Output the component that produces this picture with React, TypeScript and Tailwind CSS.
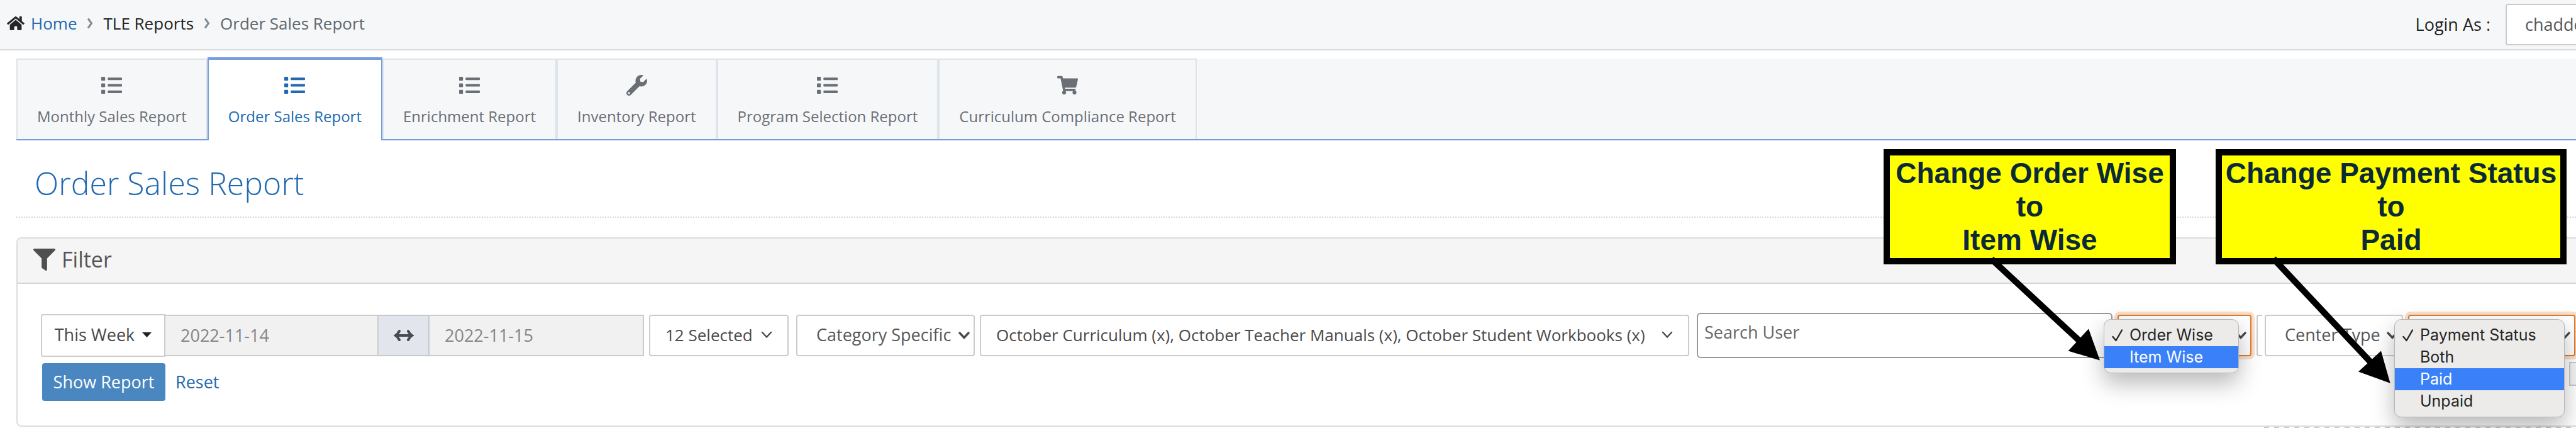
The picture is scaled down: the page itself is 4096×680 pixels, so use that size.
// App.tsx
import { useState } from 'react';
import type { ReactNode } from 'react';
import { FaFilter, FaHome, FaList, FaShoppingCart, FaWrench } from 'react-icons/fa';

const tabs = [
  { label: 'Monthly Sales Report', icon: FaList },
  { label: 'Order Sales Report', icon: FaList },
  { label: 'Enrichment Report', icon: FaList },
  { label: 'Inventory Report', icon: FaWrench },
  { label: 'Program Selection Report', icon: FaList },
  { label: 'Curriculum Compliance Report', icon: FaShoppingCart },
];

function Crumb() {
  return (
    <svg width="10" height="18" viewBox="0 0 10 18" fill="none" stroke="#858b91" strokeWidth="3" aria-hidden="true">
      <path d="M2 1.5 7.500 9 2 16.500" />
    </svg>
  );
}

function Chevron({ bold }: { bold?: boolean }) {
  return (
    <svg
      className="shrink-0"
      width="18"
      height="12"
      viewBox="0 0 18 12"
      fill="none"
      stroke="#4a4a4a"
      strokeWidth={bold ? 3.4 : 2.4}
      aria-hidden="true"
    >
      <path d="M2 2 9 9.500 16 2" strokeLinecap="round" />
    </svg>
  );
}

function Menu({ options, active, className }: { options: string[]; active: string; className: string }) {
  return (
    <ul
      role="listbox"
      className={`absolute top-[7px] -left-[22px] z-10 rounded-[11px] border border-[#b5b5b5] bg-[#ecebea] py-[7px] font-['Inter',sans-serif] text-[25px] leading-[35px] text-[#262626] shadow-[0_16px_36px_rgba(0,0,0,0.28)] ${className}`}
    >
      {options.map((option, i) => (
        <li
          key={option}
          role="option"
          aria-selected={i === 0}
          className={`flex items-center whitespace-nowrap ${option === active ? 'bg-[#3a80f8] text-white' : ''}`}
        >
          <span className="flex w-10 shrink-0 pl-3">
            {i === 0 && (
              <svg width="18" height="20" viewBox="0 0 18 20" fill="none" stroke="#262626" strokeWidth="2.400" aria-hidden="true">
                <path d="M1.500 12 6.500 18 16 1.500" strokeLinecap="round" strokeLinejoin="round" />
              </svg>
            )}
          </span>
          {option}
        </li>
      ))}
    </ul>
  );
}

interface PickerProps {
  id: string;
  label: string;
  options: string[];
  className: string;
  open?: boolean;
  children?: ReactNode;
}

function Picker({ id, label, options, className, open, children }: PickerProps) {
  return (
    <div className={`relative h-[66px] shrink-0 ${className}`}>
      <select
        id={id}
        aria-label={label}
        className={`h-full w-full appearance-none rounded border-2 bg-white pb-0.5 pl-[30px] text-[#55595c] outline-none ${
          open ? 'border-[#e07b2c] shadow-[0_0_0_5px_#f7dfcd]' : 'border-[#ccc]'
        }`}
      >
        {options.map((option) => (
          <option key={option}>{option}</option>
        ))}
      </select>
      <span className="pointer-events-none absolute inset-y-0 right-2 flex items-center">
        <Chevron bold />
      </span>
      {children}
    </div>
  );
}

function Callout({ lines, className, children }: { lines: string[]; className: string; children: ReactNode }) {
  return (
    <div className={`absolute top-[237px] z-20 h-[183px] ${className}`}>
      <div className="flex h-full flex-col items-center justify-center border-10 border-black bg-[#ffff00] font-['Liberation_Sans',Arial,sans-serif] text-[46px] leading-[53px] font-bold text-[#0a2a3a]">
        {lines.map((line) => (
          <span key={line} className="whitespace-nowrap">{line}</span>
        ))}
      </div>
      <svg className="pointer-events-none absolute top-0 left-0 overflow-visible" width="400" height="380" aria-hidden="true">
        {children}
      </svg>
    </div>
  );
}

export default function App() {
  const [tab, setTab] = useState('Order Sales Report');
  const [search, setSearch] = useState('');

  return (
    <div className="relative overflow-hidden bg-white font-['Open_Sans',sans-serif] text-[27px] leading-9">
      {/* Breadcrumb bar */}
      <header className="flex h-20 items-center justify-between border-b-2 border-[#d5dade] bg-[#f6f7f9]">
        <nav className="flex items-center pb-1 pl-[11px] text-[26px]">
          <FaHome size={28} color="#262626" />
          <a href="#home" className="ml-2.5 text-[#2369b0]">Home</a>
          <span className="mx-4"><Crumb /></span>
          <a href="#reports" className="text-[#222]">TLE Reports</a>
          <span className="mx-4"><Crumb /></span>
          <span className="text-[#5d666e]">Order Sales Report</span>
        </nav>
        <div className="flex items-center">
          <label htmlFor="login-as" className="mr-6 text-[#222]">Login As :</label>
          <select
            id="login-as"
            className="h-[66px] w-[112px] appearance-none rounded-l border-2 border-r-0 border-[#ccc] bg-white pl-[29px] text-[#55595c]"
          >
            <option>chaddo</option>
          </select>
        </div>
      </header>

      {/* Report tabs */}
      <div className="mt-[13px] ml-[26px] flex border-b-2 border-[#739ddc] bg-[#f6f7f9]">
        {tabs.map(({ label, icon: Icon }) => (
          <button
            key={label}
            type="button"
            onClick={() => setTab(label)}
            className={`flex flex-col items-center gap-[17px] border-x-2 px-[31px] pt-6 text-2xl leading-8 ${
              tab === label
                ? '-my-0.5 border-t-4 border-[#739ddc] bg-white pb-[22px] text-[#2369b0]'
                : 'border-t-2 border-[#dde4eb] pb-5 text-[#6a6f76]'
            }`}
          >
            <Icon size={33} />
            {label}
          </button>
        ))}
      </div>

      {/* Page title */}
      <div className="ml-[26px] border-b-2 border-dotted border-[#d9d9d9] pt-[38px] pb-[23px] pl-[29px]">
        <h1 className="text-[50px] leading-[60px] font-light text-[#2369b0]">Order Sales Report</h1>
      </div>

      {/* Filter panel */}
      <section className="mt-[31px] ml-[26px] rounded-l-lg border-2 border-r-0 border-[#ddd]">
        <h2 className="flex h-[72px] items-center gap-2.5 rounded-tl-md border-b-2 border-[#d5d5d5] bg-[#f5f5f5] pb-1 pl-[25px] text-[34px] text-[#555]">
          <FaFilter size={35} color="#4f4f4f" />
          Filter
        </h2>

        <form className="pt-[46px] pb-[39px] pl-[37px]" onSubmit={(e) => e.preventDefault()}>
          <div className="flex items-center gap-2 pr-px">
            <div className="flex items-center">
              <button
                type="button"
                className="flex h-[68px] w-[198px] items-center justify-center gap-3 rounded-l border-2 border-[#ccc] pb-0.5 text-[#4a4a4a]"
              >
                This Week
                <svg width="15" height="8" viewBox="0 0 15 8" fill="#222" aria-hidden="true">
                  <path d="M0 0h15L7.500 8z" />
                </svg>
              </button>
              <input
                aria-label="From date"
                readOnly
                value="2022-11-14"
                className="h-[66px] w-[339px] border-2 border-l-0 border-[#ccc] bg-[#f1f1f1] px-6 pb-0.5 text-[#858585]"
              />
              <span className="flex h-[66px] w-[81px] items-center justify-center border-y-2 border-r-2 border-[#c2cad2] bg-[#e2e6ec]">
                <svg width="32" height="18" viewBox="0 0 32 18" fill="none" stroke="#454a54" strokeWidth="4" aria-hidden="true">
                  <path d="M3 9h26M9 2C7.500 5 5.500 7.500 3 9c2.500 1.500 4.500 4 6 7M23 2c1.500 3 3.500 5.500 6 7-2.500 1.500-4.500 4-6 7" strokeLinecap="round" />
                </svg>
              </span>
              <input
                aria-label="To date"
                readOnly
                value="2022-11-15"
                className="h-[66px] w-[341px] border-2 border-l-0 border-[#ccc] bg-[#f1f1f1] px-6 pb-0.5 text-[#858585]"
              />
            </div>

            <button
              type="button"
              className="mr-1 flex h-[66px] w-[222px] shrink-0 items-center justify-between rounded border-2 border-[#ccc] px-6 pb-0.5 text-[26px] text-[#4a4a4a]"
            >
              12 Selected
              <Chevron />
            </button>
            <Picker id="category" label="Category" options={['Category Specific']} className="w-[284px]" />
            <button
              type="button"
              className="mr-1 flex h-[66px] w-[1128px] shrink-0 items-center justify-between rounded border-2 border-[#ccc] px-6 pb-0.5 text-[26px] whitespace-nowrap text-[#4a4a4a]"
            >
              October Curriculum (x), October Teacher Manuals (x), October Student Workbooks (x)
              <Chevron />
            </button>
            <input
              aria-label="Search User"
              placeholder="Search User"
              value={search}
              onChange={(e) => setSearch(e.target.value)}
              className="h-[72px] min-w-0 flex-1 rounded-md border-2 border-[#999] px-2.5 pb-3 outline-none placeholder:text-[#666]"
            />
            <Picker id="wise" label="Order Wise" options={['', 'Order Wise', 'Item Wise']} className="w-[213px]" open>
              <Menu options={['Order Wise', 'Item Wise']} active="Item Wise" className="w-[215px]" />
            </Picker>
            <div className="flex gap-1">
              <div className="h-[66px] w-[9px] rounded-l border-2 border-r-0 border-[#ccc]" />
              <Picker id="center-type" label="Center Type" options={['Center Type']} className="w-[220px]" />
            </div>
            <Picker id="payment" label="Payment Status" options={['', 'Payment Status', 'Both', 'Paid', 'Unpaid']} className="w-[266px]" open>
              <Menu options={['Payment Status', 'Both', 'Paid', 'Unpaid']} active="Paid" className="w-[271px]" />
            </Picker>
          </div>

          <div className="mt-1.5 flex items-start justify-between">
            <div className="mt-0.5 ml-0.5 flex items-center">
              <button type="submit" className="h-[60px] w-[196px] rounded bg-[#4a87c0] text-white">
                Show Report
              </button>
              <a href="#reset" className="ml-4 text-[#2369b0]">Reset</a>
            </div>
            <div className="h-[38px] w-[11px] border-2 border-r-0 border-[#c9c9c9] bg-[#f4f4f4]" />
          </div>
        </form>
      </section>
      <div className="ml-auto h-0.5 w-[496px] bg-[repeating-linear-gradient(90deg,#ccc_0_8px,transparent_8px_16px)]" />

      {/* Instruction callouts */}
      <Callout lines={['Change Order Wise', 'to', 'Item Wise']} className="right-[636px] w-[465px]">
        <path d="M171.500 174.600 313 306" stroke="#000" strokeWidth="10" />
        <path d="M344 335.600 326 285.600 293.600 320.600z" />
      </Callout>
      <Callout lines={['Change Payment Status', 'to', 'Paid']} className="right-[15px] w-[558px]">
        <path d="M92 174 248 340" stroke="#000" strokeWidth="10" />
        <path d="M277.600 371.800 263 320.600 227 353.400z" />
      </Callout>
    </div>
  );
}
